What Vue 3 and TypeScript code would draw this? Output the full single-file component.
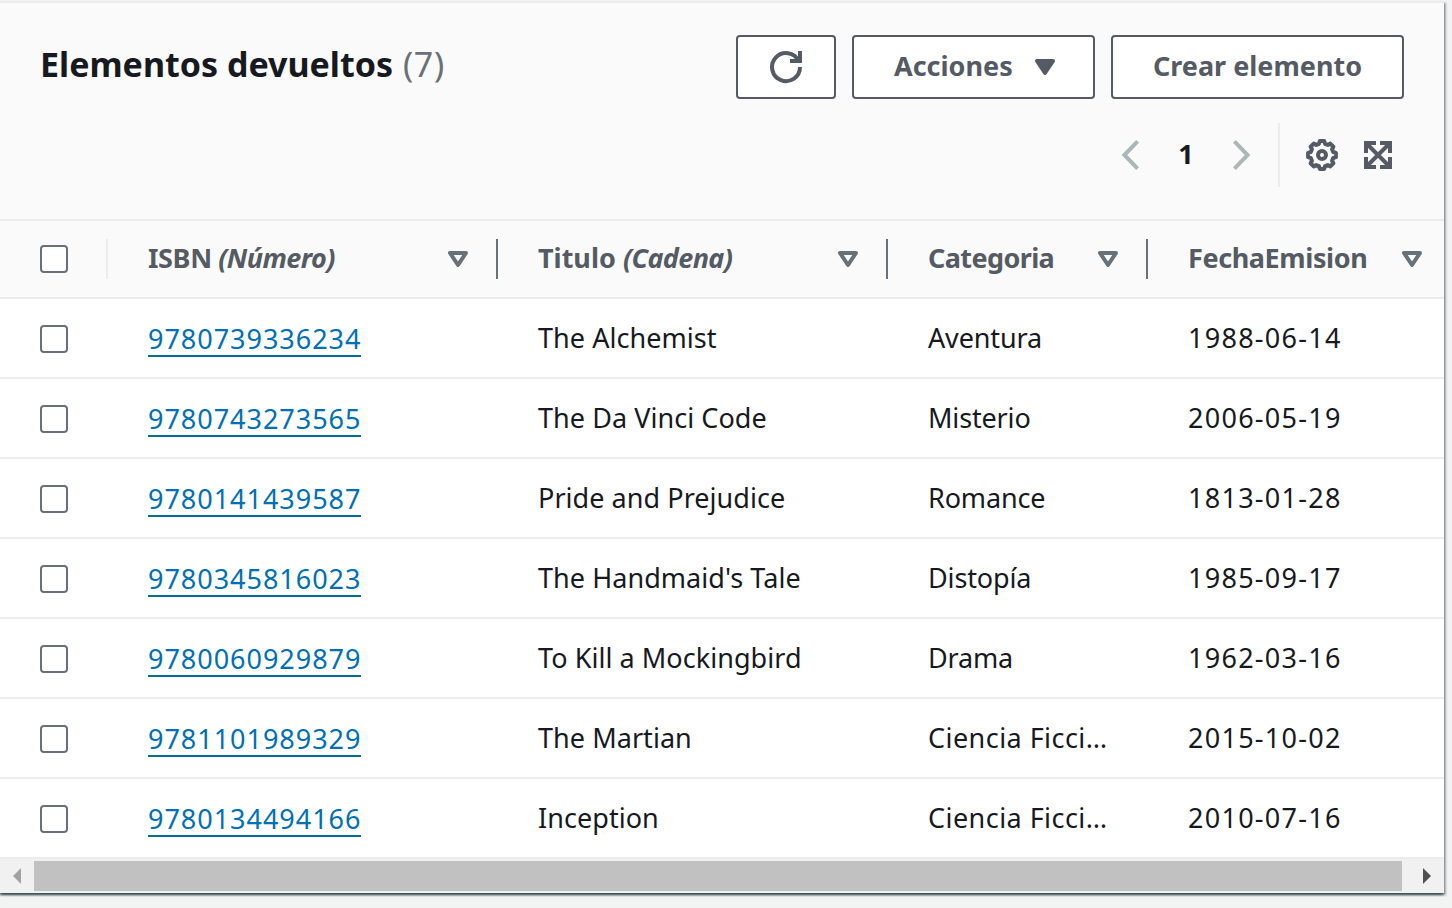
<script setup lang="ts">
interface Column {
  key: string
  label: string
  type?: string
}

interface Book {
  isbn: string
  title: string
  category: string
  date: string
}

const columns: Column[] = [
  { key: 'isbn', label: 'ISBN', type: '(Número)' },
  { key: 'title', label: 'Titulo', type: '(Cadena)' },
  { key: 'category', label: 'Categoria' },
  { key: 'date', label: 'FechaEmision' },
]

const books: Book[] = [
  { isbn: '9780739336234', title: 'The Alchemist', category: 'Aventura', date: '1988-06-14' },
  { isbn: '9780743273565', title: 'The Da Vinci Code', category: 'Misterio', date: '2006-05-19' },
  { isbn: '9780141439587', title: 'Pride and Prejudice', category: 'Romance', date: '1813-01-28' },
  { isbn: '9780345816023', title: "The Handmaid's Tale", category: 'Distopía', date: '1985-09-17' },
  { isbn: '9780060929879', title: 'To Kill a Mockingbird', category: 'Drama', date: '1962-03-16' },
  { isbn: '9781101989329', title: 'The Martian', category: 'Ciencia Ficci…', date: '2015-10-02' },
  { isbn: '9780134494166', title: 'Inception', category: 'Ciencia Ficci…', date: '2010-07-16' },
]

// Closed outline of the settings gear: eight teeth around the centre of a 16-unit box.
function gearPath(): string {
  const profile: [number, number][] = [[-15, 5.8], [-9, 7.05], [9, 7.05], [15, 5.8]]
  const points: string[] = []
  for (let tooth = 0; tooth < 8; tooth++) {
    for (const [offset, radius] of profile) {
      const a = ((tooth * 45 + offset) * Math.PI) / 180
      points.push(`${(8 + radius * Math.sin(a)).toFixed(2)} ${(8 - radius * Math.cos(a)).toFixed(2)}`)
    }
  }
  return `M${points.join('L')}Z`
}
const gear = gearPath()
</script>

<template>
  <section class="panel">
    <header class="head">
      <div class="title-row">
        <h2 class="title">Elementos devueltos <span class="count">(7)</span></h2>
        <div class="actions">
          <button class="btn refresh" type="button">
            <svg class="icon" viewBox="0 0 16 16"><path d="M10 5h5V0" /><path d="M15 8a7 7 0 1 1-.7-3" /></svg>
          </button>
          <button class="btn menu" type="button">
            <span class="btn-label menu-label">Acciones</span>
            <svg class="icon filled" viewBox="0 0 16 16"><path d="M4 5h8l-4 6z" /></svg>
          </button>
          <button class="btn create" type="button"><span class="btn-label">Crear elemento</span></button>
        </div>
      </div>
      <div class="tools">
        <svg class="icon arrow" viewBox="0 0 16 16"><path d="M11.8 1.2 5.2 8l6.6 6.8" /></svg>
        <span class="page">1</span>
        <svg class="icon arrow" viewBox="0 0 16 16"><path d="M4.2 1.2 10.8 8l-6.6 6.8" /></svg>
        <span class="divider"></span>
        <svg class="icon gear" viewBox="0 0 16 16"><path class="round" :d="gear" /><circle cx="8" cy="8" r="2" /></svg>
        <svg class="icon expand" viewBox="0 0 16 16">
          <path d="M2 7V2h5M9 2h5v5M14 9v5H9M7 14H2V9M2 2l12 12M14 2 2 14" />
        </svg>
      </div>
    </header>

    <div class="grid header-row">
      <div class="cell check"><span class="box"></span></div>
      <div v-for="c in columns" :key="c.key" class="cell th" :class="`th-${c.key}`">
        <span class="label">{{ c.label }}<template v-if="c.type">{{ ' ' }}<em>{{ c.type }}</em></template></span>
        <svg class="icon sort" viewBox="0 0 16 16"><path d="M4 5h8l-4 6z" /></svg>
      </div>
    </div>

    <div v-for="b in books" :key="b.isbn" class="grid row">
      <div class="cell check"><span class="box"></span></div>
      <div class="cell"><a class="link">{{ b.isbn }}</a></div>
      <div class="cell text name">{{ b.title }}</div>
      <div class="cell text cat" :class="{ truncated: b.category.endsWith('…') }">{{ b.category }}</div>
      <div class="cell text day">{{ b.date }}</div>
    </div>

    <div class="scrollbar">
      <span class="step"><svg viewBox="0 0 8 16"><path class="off" d="M8 0v16L0 8z" /></svg></span>
      <span class="thumb"></span>
      <span class="step end"><svg viewBox="0 0 8 16"><path class="on" d="M0 0v16l8-8z" /></svg></span>
    </div>
  </section>
</template>

<style>
html {
  background: #f2f3f3;
}
body {
  min-height: 100vh;
}
#app {
  display: flow-root;
  box-sizing: border-box;
  height: 100vh;
  overflow: hidden;
}
</style>

<style scoped>
.panel {
  box-sizing: border-box;
  width: 1444px;
  margin-top: 1px;
  border-top: 2px solid #eaeded;
  background: #fff;
  box-shadow: 0 2px 2px rgba(0, 28, 36, 0.5), 2px 2px 2px rgba(0, 28, 36, 0.3), -2px 2px 2px rgba(0, 28, 36, 0.3);
  font-family: 'Noto Sans', sans-serif;
  font-size: 27px;
  line-height: 44px;
  color: #16191f;
}
.head {
  box-sizing: border-box;
  height: 216px;
  padding: 32px 40px 0;
  background: #fafafa;
}
.title-row {
  display: flex;
  justify-content: space-between;
}
.title {
  margin: 7px 0 0;
  font-size: 34px;
  line-height: 44px;
  font-weight: 700;
  white-space: nowrap;
}
.count {
  margin-left: 1px;
  font-weight: 400;
  letter-spacing: 0.7px;
  color: #687078;
}
.actions {
  display: flex;
  gap: 16px;
}
.btn {
  display: flex;
  align-items: center;
  justify-content: center;
  box-sizing: border-box;
  height: 64px;
  padding: 0;
  border: 2px solid #545b64;
  border-radius: 4px;
  background: #fff;
  color: #545b64;
  font: 700 27px/40px 'Noto Sans', sans-serif;
}
.btn-label {
  padding-bottom: 2px;
}
.refresh {
  width: 100px;
}
.menu {
  width: 243px;
  justify-content: flex-start;
  padding-left: 40px;
}
.menu-label {
  width: 135px;
  text-align: left;
}
.create {
  width: 293px;
}
.icon {
  display: block;
  flex: none;
  width: 32px;
  height: 32px;
  overflow: visible;
  fill: none;
  stroke: #545b64;
  stroke-width: 2;
}
.filled {
  fill: #545b64;
  stroke-linejoin: round;
}
.round {
  stroke-linejoin: round;
}
.tools {
  display: flex;
  align-items: center;
  justify-content: flex-end;
  height: 64px;
  margin-top: 24px;
  padding-right: 10px;
}
.arrow {
  stroke: #aab7b8;
}
.page {
  width: 80px;
  padding-bottom: 2px;
  text-align: center;
  font-weight: 700;
}
.divider {
  width: 2px;
  height: 64px;
  margin: 0 26px 0 20px;
  background: #eaeded;
}
.expand {
  margin-left: 24px;
}
.grid {
  display: grid;
  grid-template-columns: 108px 390px 390px 260px 296px;
  box-sizing: border-box;
  height: 80px;
  border-bottom: 2px solid #eaeded;
}
.header-row {
  border-top: 2px solid #eaeded;
  background: #fafafa;
}
.cell {
  display: flex;
  align-items: center;
  padding-left: 40px;
  white-space: nowrap;
}
.row .check {
  padding-top: 2px;
}
.row .text {
  padding-bottom: 1px;
}
.name {
  letter-spacing: 0.05px;
}
.cat {
  letter-spacing: -0.15px;
}
.truncated {
  letter-spacing: 0.45px;
}
.day {
  letter-spacing: 1.27px;
}
.box {
  box-sizing: border-box;
  width: 28px;
  height: 28px;
  border: 2px solid #687078;
  border-radius: 4px;
  background: #fff;
}
.th {
  justify-content: space-between;
  padding-right: 22px;
  border-right: 2px solid #687078;
  height: 40px;
  align-self: center;
  font-weight: 700;
  letter-spacing: -0.4px;
  color: #545b64;
}
.label {
  padding-bottom: 2px;
}
.label em {
  letter-spacing: -0.6px;
}
.th-title {
  letter-spacing: 0;
}
.header-row .check {
  height: 40px;
  align-self: center;
  border-right: 2px solid #eaeded;
}
.th-category {
  letter-spacing: -0.6px;
}
.th-date {
  padding-right: 16px;
  border-right: 0;
}
.sort {
  stroke: #687078;
  stroke-linejoin: round;
}
.link {
  margin-top: 3px;
  border-bottom: 2px solid #0a6c8c;
  line-height: 33px;
  letter-spacing: 0.97px;
  color: #0070b5;
}
.scrollbar {
  display: flex;
  align-items: center;
  height: 34px;
  background: #f1f1f1;
}
.step {
  display: flex;
  justify-content: flex-end;
  width: 21px;
  padding-right: 13px;
}
.step svg {
  width: 8px;
  height: 16px;
}
.step.end {
  padding-right: 0;
  width: 29px;
}
.off {
  fill: #a3a3a3;
}
.on {
  fill: #505050;
}
.thumb {
  width: 1368px;
  height: 30px;
  background: #c1c1c1;
}
</style>
